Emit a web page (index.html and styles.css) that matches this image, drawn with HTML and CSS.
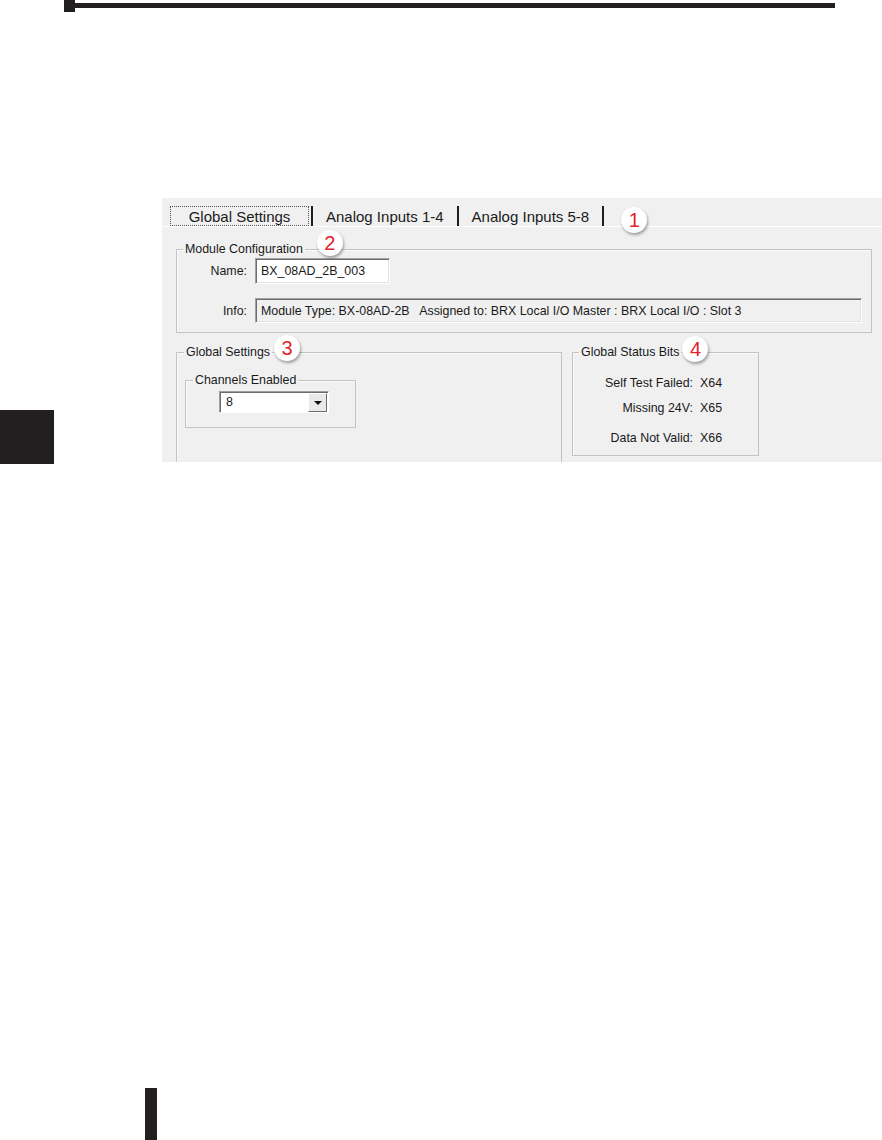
FILE: index.html
```html
<!DOCTYPE html>
<html lang="en">
<head>
    <meta charset="UTF-8">
    <meta name="viewport" content="width=device-width, initial-scale=1.0">
    <title>BX-08AD-2B Module Configuration</title>
    <link rel="stylesheet" href="styles.css">
</head>
<body>
    <!-- Chapter rule at the top of the page -->
    <div class="rule">
        <div class="rule-cap"></div>
        <div class="rule-line"></div>
    </div>

    <div class="spread">
        <div class="edge-tab"></div>

        <!-- Screenshot of the module configuration dialog -->
        <div class="shot">
            <div class="tabstrip">
                <div class="tab tab-current"><span class="tab-focus">Global Settings</span></div>
                <div class="tab">Analog Inputs 1-4</div>
                <div class="tab">Analog Inputs 5-8</div>
                <div class="badge badge-tabs">1</div>
            </div>

            <div class="tabpage">
                <fieldset class="group group-module">
                    <legend>Module Configuration<span class="badge badge-module">2</span></legend>
                    <div class="form-grid">
                        <label class="form-label">Name:</label>
                        <div class="field field-name">BX_08AD_2B_003</div>
                        <label class="form-label">Info:</label>
                        <div class="field field-info">Module Type: BX-08AD-2B   Assigned to: BRX Local I/O Master : BRX Local I/O : Slot 3</div>
                    </div>
                </fieldset>

                <div class="lower">
                    <fieldset class="group group-settings">
                        <legend>Global Settings<span class="badge badge-settings">3</span></legend>
                        <fieldset class="group group-channels">
                            <legend>Channels Enabled</legend>
                            <div class="select">
                                <span class="select-value">8</span>
                                <span class="select-btn"><span class="arrow"></span></span>
                            </div>
                        </fieldset>
                    </fieldset>

                    <fieldset class="group group-status">
                        <legend>Global Status Bits<span class="badge badge-status">4</span></legend>
                        <div class="bits">
                            <div class="bit-row"><span class="bit-label">Self Test Failed:</span><span>X64</span></div>
                            <div class="bit-row bit-row-2"><span class="bit-label">Missing 24V:</span><span>X65</span></div>
                            <div class="bit-row bit-row-3"><span class="bit-label">Data Not Valid:</span><span>X66</span></div>
                        </div>
                    </fieldset>
                </div>
            </div>
        </div>
    </div>

    <div class="page-mark"></div>
</body>
</html>
```

FILE: styles.css
```css
* {
    box-sizing: border-box;
}

body {
    margin: 0;
    width: 882px;
    height: 1140px;
    display: flex;
    flex-direction: column;
    background: #fff;
    overflow: hidden;
    font-family: 'Liberation Sans', Arial, sans-serif;
}

/* page furniture */
.rule {
    display: flex;
    margin-left: 64px;
    width: 771px;
    height: 12px;
}

.rule-cap {
    width: 11px;
    height: 12px;
    background: #231f20;
}

.rule-line {
    flex: 1;
    height: 5px;
    margin-top: 3px;
    background: #231f20;
}

.spread {
    display: flex;
    align-items: flex-start;
    margin-top: 186px;
}

.edge-tab {
    flex-shrink: 0;
    width: 54px;
    height: 54px;
    margin-top: 212px;
    background: #231f20;
}

.page-mark {
    margin-top: auto;
    margin-left: 145px;
    width: 12px;
    height: 52px;
    background: #231f20;
}

/* dialog screenshot */
.shot {
    margin-left: 108px;
    width: 720px;
    height: 264px;
    background: #f0f0f0;
    overflow: hidden;
    color: #1a1a1a;
    font-size: 12.4px;
}

.tabstrip {
    display: flex;
    height: 29px;
    padding-left: 8px;
    border-bottom: 1px solid #fff;
}

.tab {
    display: flex;
    align-items: center;
    height: 20px;
    margin-top: 8px;
    padding: 0 13px;
    border-right: 2px solid #1e1e1e;
    font-size: 15px;
    white-space: nowrap;
}

.tab-current {
    padding: 0 2px 0 0;
}

.tab-focus {
    display: flex;
    align-items: center;
    justify-content: center;
    width: 139px;
    height: 20px;
    border: 1px dotted #555;
}

.badge {
    display: flex;
    align-items: center;
    justify-content: center;
    width: 26px;
    height: 26px;
    border-radius: 50%;
    background: #fff;
    box-shadow: 1px 2px 3px rgba(0, 0, 0, 0.35);
    color: #e3232b;
    font-size: 20px;
    line-height: 1;
}

.badge-tabs {
    flex-shrink: 0;
    margin: 9px 0 0 17px;
}

.tabpage {
    padding: 15px 10px 0 14px;
}

.group {
    margin: 0;
    padding: 0;
    min-width: 0;
    border: 1px solid #c3c3c3;
    box-shadow: inset 1px 1px #fafafa;
}

.group legend {
    position: relative;
    margin-left: 6px;
    padding: 0 2px;
    line-height: 14px;
    white-space: nowrap;
}

.group legend .badge {
    position: absolute;
}

.badge-module {
    left: calc(100% + 12px);
    top: -12px;
}

.badge-settings {
    left: calc(100% + 2px);
    top: -10px;
}

.badge-status {
    left: calc(100% + 1px);
    top: -9px;
}

.form-grid {
    display: grid;
    grid-template-columns: 70px 1fr;
    column-gap: 8px;
    row-gap: 14px;
    align-items: center;
    padding: 2px 9px 9px 0;
}

.form-label {
    text-align: right;
}

.field {
    display: flex;
    align-items: center;
    padding-left: 5px;
    border: 1px solid;
    border-color: #a0a0a0 #fff #fff #a0a0a0;
    box-shadow: inset 1px 1px #6d6d6d, inset -1px -1px #e3e3e3;
    white-space: pre;
}

.field-name {
    width: 135px;
    height: 26px;
    background: #fff;
}

.field-info {
    height: 25px;
    background: #f0f0f0;
}

.lower {
    display: flex;
    align-items: flex-start;
    gap: 10px;
    margin-top: 12px;
}

.group-settings {
    width: 386px;
    height: 140px;
}

.group-settings legend,
.group-channels legend {
    margin-left: 7px;
}

.group-channels {
    width: 171px;
    margin: 14px 0 0 8px;
}

.select {
    display: flex;
    width: 110px;
    height: 22px;
    margin: 4px 0 14px 33px;
    background: #fff;
    border: 1px solid;
    border-color: #a0a0a0 #fff #fff #a0a0a0;
    box-shadow: inset 1px 1px #6d6d6d;
}

.select-value {
    flex: 1;
    display: flex;
    align-items: center;
    padding-left: 6px;
}

.select-btn {
    display: flex;
    align-items: center;
    justify-content: center;
    width: 19px;
    margin: 1px 1px 0 0;
    background: #e9e9e9;
    border: 1px solid;
    border-color: #fff #6d6d6d #6d6d6d #fff;
}

.arrow {
    width: 0;
    height: 0;
    border-left: 4px solid transparent;
    border-right: 4px solid transparent;
    border-top: 4px solid #111;
}

.group-status {
    width: 187px;
}

.bits {
    padding: 17px 0 10px;
}

.bit-row {
    display: flex;
    gap: 7px;
    line-height: 14px;
}

.bit-row-2 {
    margin-top: 11px;
}

.bit-row-3 {
    margin-top: 16px;
}

.bit-label {
    width: 120px;
    text-align: right;
}
```
